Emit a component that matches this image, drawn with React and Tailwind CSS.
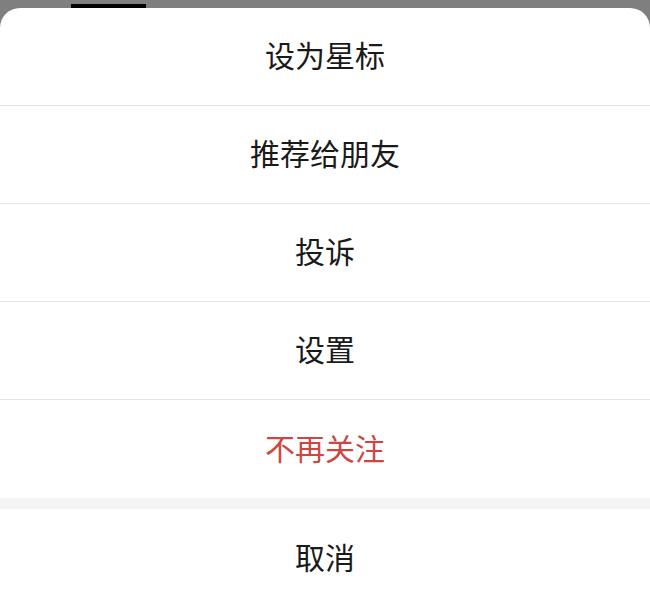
export default function App() {
  const items = ["设为星标", "推荐给朋友", "投诉", "设置"];
  const font = { fontFamily: '"Noto Sans CJK SC", "Noto Sans", sans-serif' };

  return (
    <div className="w-[650px] h-[608px] bg-[#7f7f7f] overflow-hidden flex flex-col">
      <div className="h-[8px] shrink-0 pt-[4px] pl-[71px]">
        <div className="w-[75px] h-[4px] bg-black" />
      </div>
      <div className="flex-1 bg-white rounded-t-[20px] flex flex-col" style={font}>
        {items.map((t) => (
          <button
            key={t}
            className="h-[98px] shrink-0 flex items-center justify-center pb-[4px] border-b border-[#e6e6e6] text-[30px] text-[#1a1a1a]"
          >
            {t}
          </button>
        ))}
        <button className="h-[98px] shrink-0 flex items-center justify-center pb-[4px] text-[30px] text-[#cc4741]">
          不再关注
        </button>
        <div className="h-[11px] shrink-0 bg-[#f5f5f5]" />
        <button className="flex-1 flex items-center justify-center pb-[4px] text-[30px] text-[#1a1a1a]">
          取消
        </button>
      </div>
    </div>
  );
}
